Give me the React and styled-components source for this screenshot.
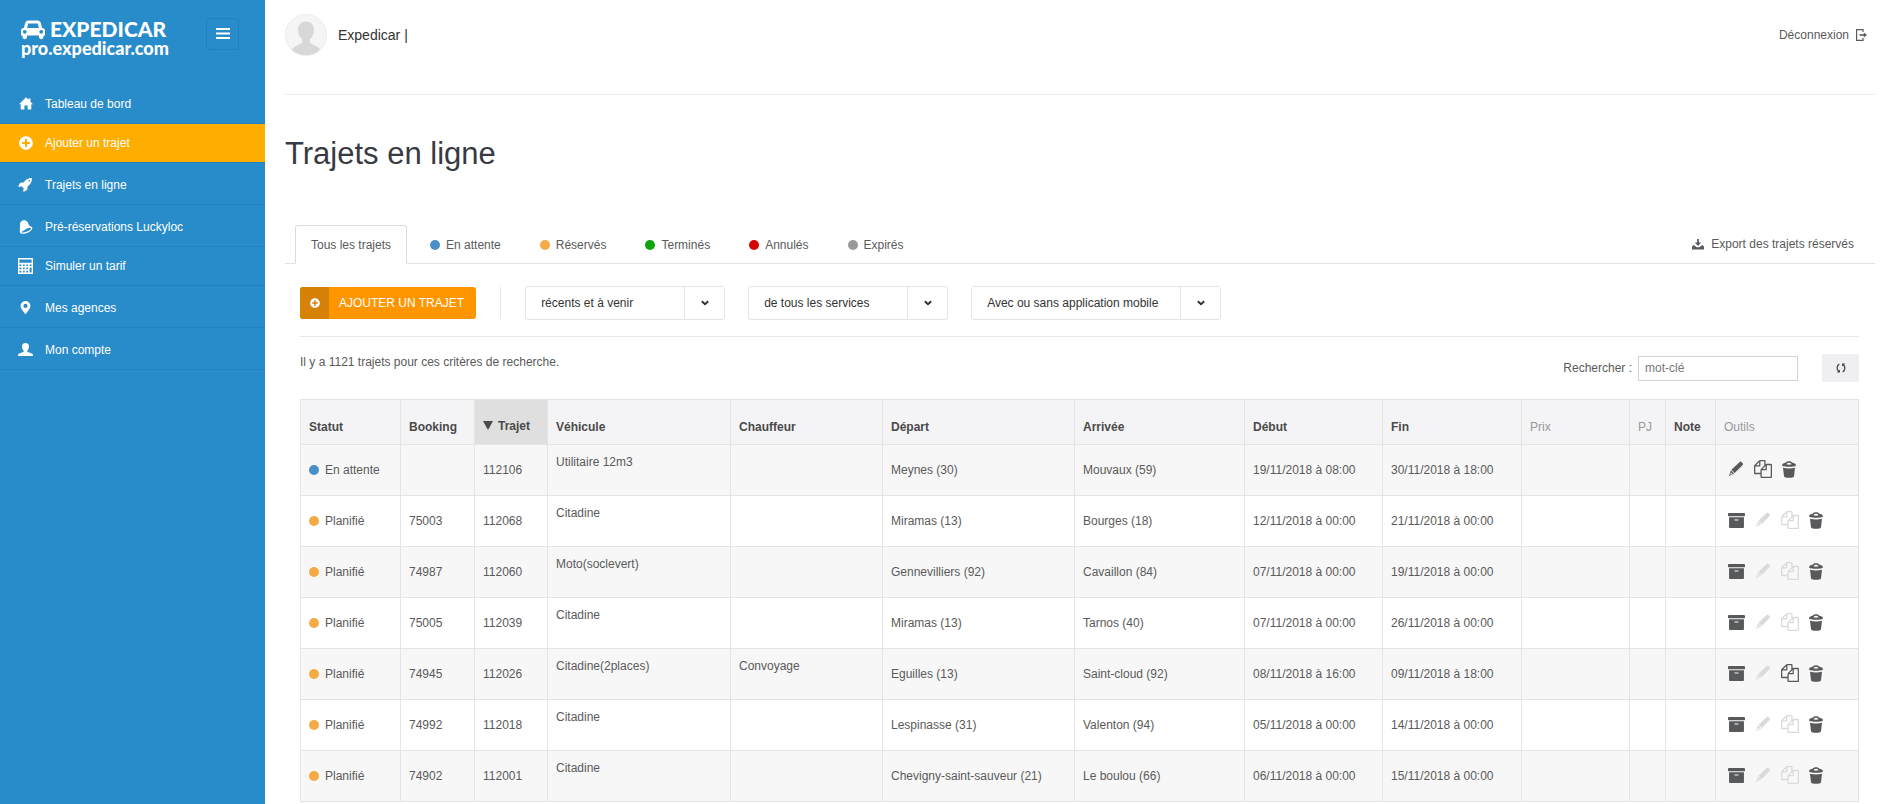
import React, { useState } from "react";
import styled, { createGlobalStyle } from "styled-components";
import { FaArchive, FaMapMarkerAlt, FaPlusCircle } from "react-icons/fa";

const GlobalStyle = createGlobalStyle`
  * {
    box-sizing: border-box;
  }

  body {
    margin: 0;
    background-color: #fff;
    color: #5a5a5a;
    font-family: "Liberation Sans", Arial, sans-serif;
    font-size: 12px;
    line-height: 16px;
  }

  button, input, select {
    font: inherit;
    color: inherit;
  }

  a {
    color: inherit;
    text-decoration: none;
  }
`;

const Page = styled.div`
  display: flex;
  min-height: 100vh;
`;

const Sidebar = styled.aside`
  flex: 0 0 265px;
  background-color: #288bca;
  color: #fff;
`;

const SidebarTop = styled.div`
  display: flex;
  justify-content: space-between;
  align-items: flex-start;
  height: 82px;
  padding: 18px 26px 0 21px;
`;

const Logo = styled.a`
  display: block;
  font-family: Lato, sans-serif;
  font-weight: 900;
`;

const LogoName = styled.span`
  display: flex;
  align-items: center;
  gap: 5px;
  font-size: 21px;
  line-height: 22px;
`;

const LogoSite = styled.span`
  display: block;
  font-size: 18px;
  line-height: 16px;
`;

const MenuButton = styled.button`
  display: flex;
  align-items: center;
  justify-content: center;
  width: 33px;
  height: 32px;
  padding: 0;
  background: transparent;
  border: 1px solid #2380bd;
  border-radius: 3px;
  cursor: pointer;
`;

const NavItem = styled.a`
  display: flex;
  align-items: center;
  gap: 11px;
  height: ${(props) => (props.$compact ? "39px" : "42px")};
  padding: ${(props) => (props.$compact ? "0 0 0 17px" : "2px 0 0 17px")};
  background-color: ${(props) => (props.$active ? "#ffae00" : "transparent")};
  border-bottom: 1px solid #2280be;
`;

const NavIcon = styled.span`
  display: flex;
  justify-content: center;
  width: 17px;
`;

const Content = styled.main`
  flex: 1;
  min-width: 0;
  padding: 0 5px 0 20px;
`;

const Header = styled.header`
  display: flex;
  justify-content: space-between;
  align-items: center;
  padding: 14px 8px 38px 0;
  border-bottom: 1px solid #ececec;
`;

const User = styled.div`
  display: flex;
  align-items: center;
  gap: 11px;
  font-size: 14px;
  color: #333;
`;

const HeaderLink = styled.a`
  display: flex;
  align-items: center;
  gap: 7px;
`;

const Title = styled.h1`
  margin: 41px 0 53px;
  font-size: 31px;
  line-height: 36px;
  font-weight: 400;
  color: #373a42;
`;

const TabBar = styled.div`
  display: flex;
  justify-content: space-between;
  align-items: center;
  padding: 0 21px 0 10px;
  border-bottom: 1px solid #e2e2e2;
`;

const Tabs = styled.nav`
  display: flex;
  gap: 7px;
`;

const Tab = styled.button`
  display: flex;
  align-items: center;
  gap: 6px;
  height: 39px;
  margin-bottom: -1px;
  padding: 0 15px;
  background: ${(props) => (props.$active ? "#fff" : "transparent")};
  border: 1px solid ${(props) => (props.$active ? "#dcdcdc" : "transparent")};
  border-bottom-color: ${(props) => (props.$active ? "#fff" : "transparent")};
  border-radius: 3px 3px 0 0;
  cursor: pointer;
`;

const Dot = styled.span`
  flex: none;
  width: 10px;
  height: 10px;
  border-radius: 50%;
  background-color: ${(props) => props.$color};
`;

const Panel = styled.section`
  margin: 0 16px 0 15px;
`;

const Toolbar = styled.div`
  display: flex;
  align-items: center;
  gap: 24px;
  padding: 22px 0 16px;
  border-bottom: 1px solid #e8e8e8;
`;

const Filters = styled.div`
  display: flex;
  gap: 23px;
`;

const AddButton = styled.button`
  display: flex;
  align-items: stretch;
  height: 32px;
  padding: 0;
  overflow: hidden;
  background-color: #ff9600;
  border: none;
  border-radius: 3px;
  color: #fff;
  cursor: pointer;
`;

const AddIcon = styled.span`
  display: flex;
  align-items: center;
  justify-content: center;
  width: 29px;
  background-color: #d68208;
`;

const AddLabel = styled.span`
  padding: 8px 12px 8px 10px;
`;

const Separator = styled.span`
  width: 1px;
  height: 32px;
  background-color: #e8e8e8;
`;

const SelectBox = styled.div`
  display: grid;
  grid-template-columns: 1fr 40px;
  width: ${(props) => (props.$wide ? "250px" : "200px")};
  height: 34px;
  border: 1px solid #e4e4e4;
  border-radius: 3px;
`;

const Select = styled.select`
  grid-area: 1 / 1 / 2 / 3;
  width: 100%;
  padding: 0 44px 0 15px;
  appearance: none;
  background: transparent;
  border: none;
  color: #333;
`;

const SelectArrow = styled.span`
  grid-area: 1 / 2 / 2 / 3;
  display: flex;
  align-items: center;
  justify-content: center;
  border-left: 1px solid #e4e4e4;
  pointer-events: none;
`;

const ResultBar = styled.div`
  display: flex;
  justify-content: space-between;
  align-items: flex-start;
  padding: 17px 0;
`;

const Search = styled.form`
  display: flex;
  align-items: center;
`;

const SearchInput = styled.input`
  width: 160px;
  height: 25px;
  margin: 0 24px 0 6px;
  padding: 0 6px;
  border: 1px solid #d4d4d4;

  &::placeholder {
    color: #777;
    opacity: 1;
  }
`;

const RefreshButton = styled.button`
  display: flex;
  align-items: center;
  justify-content: center;
  width: 37px;
  height: 28px;
  padding: 0;
  background-color: #efeff1;
  border: none;
  border-radius: 2px;
  cursor: pointer;
`;

const Table = styled.table`
  width: 100%;
  table-layout: fixed;
  border-spacing: 0;
  border-top: 1px solid #e4e4e4;
  border-left: 1px solid #e4e4e4;
`;

const HeadCell = styled.th`
  height: 45px;
  padding: 10px 8px 0;
  background-color: ${(props) => (props.$sorted ? "#dfdfdf" : "#f4f4f6")};
  border-right: 1px solid #e4e4e4;
  border-bottom: 1px solid #e4e4e4;
  color: ${(props) => (props.$muted ? "#999" : "#4a4a4a")};
  font-weight: ${(props) => (props.$muted ? 400 : 700)};
  text-align: left;
  white-space: nowrap;
`;

const SortButton = styled.button`
  display: flex;
  align-items: center;
  gap: 5px;
  padding: 0 0 3px;
  background: none;
  border: none;
  cursor: pointer;
`;

const Row = styled.tr`
  background-color: #fff;

  &:nth-child(odd) {
    background-color: #f7f7f7;
  }
`;

const Cell = styled.td`
  height: 51px;
  padding: ${(props) => (props.$top ? "9px 8px" : "0 8px")};
  vertical-align: ${(props) => (props.$top ? "top" : "middle")};
  border-right: 1px solid #e4e4e4;
  border-bottom: 1px solid #e4e4e4;
  white-space: nowrap;
`;

const Status = styled.span`
  display: flex;
  align-items: center;
  gap: 6px;
`;

const Tools = styled.div`
  display: flex;
  align-items: center;
  gap: 10px;
  padding: 0 0 2px 4px;
`;

const ToolButton = styled.button`
  display: flex;
  padding: 0;
  background: none;
  border: none;
  color: #58595b;
  cursor: pointer;

  &:disabled {
    color: #dadada;
    cursor: default;
  }
`;

const CarIcon = () => (
  <svg width="24" height="21" viewBox="0 0 2048 1792" fill="currentColor">
    <path d="M480 1088q0-66-47-113t-113-47-113 47-47 113 47 113 113 47 113-47 47-113zm36-320h1016l-89-357q-2-8-14-17.5t-21-9.5h-768q-9 0-21 9.5t-14 17.5zm1372 320q0-66-47-113t-113-47-113 47-47 113 47 113 113 47 113-47 47-113zm160-96v384q0 14-9 23t-23 9h-96v128q0 80-56 136t-136 56-136-56-56-136v-128h-1024v128q0 80-56 136t-136 56-136-56-56-136v-128h-96q-14 0-23-9t-9-23v-384q0-93 65.5-158.5t158.5-65.5h28l105-419q23-94 104-157.5t179-63.5h768q98 0 179 63.5t104 157.5l105 419h28q93 0 158.5 65.5t65.5 158.5z" />
  </svg>
);

const MenuIcon = () => (
  <svg width="14" height="12" viewBox="0 0 14 12" fill="#fff">
    <path d="M0 0h14v2H0zM0 4.500h14v2H0zM0 9h14v2H0z" />
  </svg>
);

const HomeIcon = () => (
  <svg width="14" height="13" viewBox="0 0 14 13" fill="currentColor">
    <path d="M7 .2 9.6 2.8V1.6h1.9v3.1L14 7.2h-1.7v4.6q0 .8-.8.8H8.6V8.4H5.4v4.2H2.5q-.8 0-.8-.8V7.2H0z" />
  </svg>
);

const RocketIcon = () => (
  <svg width="15" height="15" viewBox="0 0 1792 1792" fill="currentColor">
    <path d="M1440 448q0-40-28-68t-68-28-68 28-28 68 28 68 68 28 68-28 28-68zm224-288q0 249-75.5 430.5t-253.5 360.5q-81 80-195 176l-20 379q-2 16-16 26l-384 224q-7 4-16 4-12 0-23-9l-64-64q-13-14-8-32l85-276-281-281-276 85q-3 1-9 1-14 0-23-9l-64-64q-17-19-5-39l224-384q10-14 26-16l379-20q96-114 176-195 188-187 358-258t431-71q14 0 24 9.5t10 22.5z" />
  </svg>
);

const BellIcon = () => (
  <svg width="14" height="14" viewBox="0 0 14 14" fill="currentColor">
    <path d="M1.100 12.400C.3 9.600 1.200 7.700 1 5.200.8 2.400 2.200.600 4.600.300 7.200 0 8.700 1.600 9.300 3.600c.7 2.200 1.500 2.600 3 3.600L8.300 8.200 4.200 11z" />
    <path
      d="M1.500 11.900C4.200 8 10 5.700 12.600 7.600 13.400 10.200 7 13.900 2 12.900z"
      fill="none"
      stroke="currentColor"
      strokeWidth="1.300"
    />
  </svg>
);

const CalculatorIcon = () => (
  <svg width="15" height="16" viewBox="0 0 15 16" fill="none" stroke="currentColor">
    <path d="M.7.700h13.600v14.600H.7z" strokeWidth="1.400" />
    <path d="M1 5.600h13M1 8.800h13M1 12h9.500M4.200 5.600V15M7.500 5.600V15M10.800 5.600V15" strokeWidth="1.600" />
  </svg>
);

const UserIcon = () => (
  <svg width="15" height="13" viewBox="0 0 15 13" fill="currentColor">
    <path d="M7.500 0C9.800 0 11 1.500 11 3.500c0 1.700-.7 3.300-1.700 4.200v1.100l4.500 1.700c.9.400 1.200.9 1.200 2.500H0c0-1.600.3-2.100 1.200-2.500l4.500-1.700V7.700C4.700 6.800 4 5.200 4 3.500 4 1.500 5.200 0 7.500 0z" />
  </svg>
);

const AvatarIcon = () => (
  <svg width="42" height="42" viewBox="0 0 42 42">
    <circle cx="21" cy="21" r="20.500" fill="#f5f5f5" stroke="#ececec" />
    <path
      d="M21 7.500c5 0 8 3.300 8 8.500 0 4-1.700 7.200-4 9v3.500c0 2 8.500 2.500 10 7.500C31.500 39.500 26.500 41 21 41S10.500 39.500 7 36c1.500-5 10-5.500 10-7.500V25c-2.300-1.800-4-5-4-9 0-5.200 3-8.500 8-8.500z"
      fill="#d8d8d8"
    />
  </svg>
);

const LogoutIcon = () => (
  <svg width="11" height="12" viewBox="0 0 11 12" fill="none" stroke="currentColor" strokeWidth="1.200">
    <path d="M7 3V.6H.6v10.800H7V9" />
    <path d="M3.500 6h5" strokeWidth="1.600" />
    <path d="M7.800 3.600 11 6 7.800 8.400z" fill="currentColor" stroke="none" />
  </svg>
);

const ExportIcon = () => (
  <svg width="12" height="11" viewBox="0 0 12 11" fill="currentColor">
    <path d="M5.100 0h1.800v3.600h2.300L6 7 2.800 3.600h2.300z" />
    <path d="M0 7.800 1.500 6l1.800 1c.3 1.700 5.100 1.700 5.400 0l1.800-1L12 7.800V10q0 .6-.6.6H.6Q0 10.600 0 10z" />
  </svg>
);

const ChevronIcon = () => (
  <svg width="8" height="6" viewBox="0 0 8 6" fill="none" stroke="#333" strokeWidth="2">
    <path d="m.8 1.200 3.200 3 3.200-3" />
  </svg>
);

const RefreshIcon = () => (
  <svg width="10" height="10" viewBox="0 0 10 10" fill="none" stroke="#444" strokeWidth="1.300">
    <path d="M3.300 1.200C.6 2.400.4 6.800 3 8.600M6.700 8.800C9.400 7.600 9.600 3.200 7 1.400" />
    <path d="M3.900 6.400v3.200H.8zM6.100 3.600V.4h3.100z" fill="#444" stroke="none" />
  </svg>
);

const SortIcon = () => (
  <svg width="10" height="9" viewBox="0 0 10 9" fill="currentColor">
    <path d="M0 0h10L5 9z" />
  </svg>
);

const PencilIcon = () => (
  <svg width="16" height="16" viewBox="0 0 16 16" fill="currentColor">
    <path d="M11.700.900q.9-.8 1.700 0l1.300 1.300q.8.800 0 1.700L6.700 12 3.400 8.700z" />
    <path d="M2.900 9.300 6.200 12.600 1 15zM3 11.400l-.9 2.300 2.300-.9z" fillRule="evenodd" />
  </svg>
);

const CopyIcon = () => (
  <svg width="18" height="18" viewBox="0 0 1792 1792" fill="currentColor">
    <path d="M1696 384q40 0 68 28t28 68v1216q0 40-28 68t-68 28h-960q-40 0-68-28t-28-68v-288h-544q-40 0-68-28t-28-68v-672q0-40 20-88t48-76l408-408q28-28 76-48t88-20h416q40 0 68 28t28 68v328q68-40 128-40h416zm-544 213l-299 299h299v-299zm-640-384l-299 299h299v-299zm196 647l316-316v-416h-384v416q0 40-28 68t-68 28h-416v640h512v-256q0-40 20-88t48-76zm956 804v-1152h-384v416q0 40-28 68t-68 28h-416v640h896z" />
  </svg>
);

const TrashIcon = () => (
  <svg width="14" height="17" viewBox="0 0 14 17" fill="currentColor">
    <path
      d="M0 4.200C0 2.800 2 2 4 1.500 4.500-.1 9.500-.1 10 1.500c2 .5 4 1.300 4 2.700 0 2-14 2-14 0zM4.300 3.300q2.700.9 5.400 0Q7 .4 4.300 3.300z"
      fillRule="evenodd"
    />
    <path d="M1 6.700q6 1.600 12 0l-1 8.500c-.3 2-9.700 2-10 0z" />
  </svg>
);

const menu = [
  { label: "Tableau de bord", icon: <HomeIcon /> },
  { label: "Ajouter un trajet", icon: <FaPlusCircle size={14} />, active: true, compact: true },
  { label: "Trajets en ligne", icon: <RocketIcon /> },
  { label: "Pré-réservations Luckyloc", icon: <BellIcon /> },
  { label: "Simuler un tarif", icon: <CalculatorIcon />, compact: true },
  { label: "Mes agences", icon: <FaMapMarkerAlt size={13} /> },
  { label: "Mon compte", icon: <UserIcon /> },
];

const onglets = [
  { label: "Tous les trajets" },
  { label: "En attente", color: "#4a8fc7" },
  { label: "Réservés", color: "#f4aa45" },
  { label: "Terminés", color: "#0ba50b" },
  { label: "Annulés", color: "#d50505" },
  { label: "Expirés", color: "#999" },
];

const filtres = [
  { name: "Période", value: "récents et à venir" },
  { name: "Services", value: "de tous les services" },
  { name: "Application mobile", value: "Avec ou sans application mobile", wide: true },
];

const colonnes = [
  { label: "Statut", width: 100 },
  { label: "Booking", width: 74 },
  { label: "Trajet", width: 73, sorted: true },
  { label: "Véhicule", width: 183 },
  { label: "Chauffeur", width: 152 },
  { label: "Départ", width: 192 },
  { label: "Arrivée", width: 170 },
  { label: "Début", width: 138 },
  { label: "Fin", width: 139 },
  { label: "Prix", width: 108, muted: true },
  { label: "PJ", width: 36, muted: true },
  { label: "Note", width: 50 },
  { label: "Outils", width: 143, muted: true },
];

const trajets = [
  { id: "112106", attente: true, booking: "", vehicule: "Utilitaire 12m3", depart: "Meynes (30)", arrivee: "Mouvaux (59)", debut: "19/11/2018 à 08:00", fin: "30/11/2018 à 18:00", copie: true },
  { id: "112068", booking: "75003", vehicule: "Citadine", depart: "Miramas (13)", arrivee: "Bourges (18)", debut: "12/11/2018 à 00:00", fin: "21/11/2018 à 00:00" },
  { id: "112060", booking: "74987", vehicule: "Moto(soclevert)", depart: "Gennevilliers (92)", arrivee: "Cavaillon (84)", debut: "07/11/2018 à 00:00", fin: "19/11/2018 à 00:00" },
  { id: "112039", booking: "75005", vehicule: "Citadine", depart: "Miramas (13)", arrivee: "Tarnos (40)", debut: "07/11/2018 à 00:00", fin: "26/11/2018 à 00:00" },
  { id: "112026", booking: "74945", vehicule: "Citadine(2places)", chauffeur: "Convoyage", depart: "Eguilles (13)", arrivee: "Saint-cloud (92)", debut: "08/11/2018 à 16:00", fin: "09/11/2018 à 18:00", copie: true },
  { id: "112018", booking: "74992", vehicule: "Citadine", depart: "Lespinasse (31)", arrivee: "Valenton (94)", debut: "05/11/2018 à 00:00", fin: "14/11/2018 à 00:00" },
  { id: "112001", booking: "74902", vehicule: "Citadine", depart: "Chevigny-saint-sauveur (21)", arrivee: "Le boulou (66)", debut: "06/11/2018 à 00:00", fin: "15/11/2018 à 00:00" },
];

export default function App() {
  const [onglet, setOnglet] = useState("Tous les trajets");
  const [recherche, setRecherche] = useState("");

  return (
    <Page>
      <GlobalStyle />
      <Sidebar>
        <SidebarTop>
          <Logo href="#">
            <LogoName>
              <CarIcon />
              EXPEDICAR
            </LogoName>
            <LogoSite>pro.expedicar.com</LogoSite>
          </Logo>
          <MenuButton type="button" aria-label="Menu">
            <MenuIcon />
          </MenuButton>
        </SidebarTop>
        <nav>
          {menu.map((item) => (
            <NavItem key={item.label} href="#" $active={item.active} $compact={item.compact}>
              <NavIcon>{item.icon}</NavIcon>
              {item.label}
            </NavItem>
          ))}
        </nav>
      </Sidebar>

      <Content>
        <Header>
          <User>
            <AvatarIcon />
            <span>Expedicar |</span>
          </User>
          <HeaderLink href="#">
            Déconnexion
            <LogoutIcon />
          </HeaderLink>
        </Header>

        <Title>Trajets en ligne</Title>

        <TabBar>
          <Tabs>
            {onglets.map((item) => (
              <Tab
                key={item.label}
                type="button"
                $active={item.label === onglet}
                onClick={() => setOnglet(item.label)}
              >
                {item.color && <Dot $color={item.color} />}
                {item.label}
              </Tab>
            ))}
          </Tabs>
          <HeaderLink href="#">
            <ExportIcon />
            Export des trajets réservés
          </HeaderLink>
        </TabBar>

        <Panel>
          <Toolbar>
            <AddButton type="button">
              <AddIcon>
                <FaPlusCircle size={10} />
              </AddIcon>
              <AddLabel>AJOUTER UN TRAJET</AddLabel>
            </AddButton>
            <Separator />
            <Filters>
              {filtres.map((filtre) => (
                <SelectBox key={filtre.name} $wide={filtre.wide}>
                  <Select aria-label={filtre.name}>
                    <option>{filtre.value}</option>
                  </Select>
                  <SelectArrow>
                    <ChevronIcon />
                  </SelectArrow>
                </SelectBox>
              ))}
            </Filters>
          </Toolbar>

          <ResultBar>
            <span>Il y a 1121 trajets pour ces critères de recherche.</span>
            <Search onSubmit={(e) => e.preventDefault()}>
              <label htmlFor="rechercher">Rechercher :</label>
              <SearchInput
                id="rechercher"
                placeholder="mot-clé"
                value={recherche}
                onChange={(e) => setRecherche(e.target.value)}
              />
              <RefreshButton type="submit" aria-label="Actualiser">
                <RefreshIcon />
              </RefreshButton>
            </Search>
          </ResultBar>

          <Table>
            <colgroup>
              {colonnes.map((col) => (
                <col key={col.label} width={col.width} />
              ))}
            </colgroup>
            <thead>
              <tr>
                {colonnes.map((col) => (
                  <HeadCell key={col.label} scope="col" $sorted={col.sorted} $muted={col.muted}>
                    {col.sorted ? (
                      <SortButton type="button">
                        <SortIcon />
                        {col.label}
                      </SortButton>
                    ) : (
                      col.label
                    )}
                  </HeadCell>
                ))}
              </tr>
            </thead>
            <tbody>
              {trajets.map((trajet) => (
                <Row key={trajet.id}>
                  <Cell>
                    <Status>
                      <Dot $color={trajet.attente ? "#4a8fc7" : "#f4aa45"} />
                      {trajet.attente ? "En attente" : "Planifié"}
                    </Status>
                  </Cell>
                  <Cell>{trajet.booking}</Cell>
                  <Cell>{trajet.id}</Cell>
                  <Cell $top>{trajet.vehicule}</Cell>
                  <Cell $top>{trajet.chauffeur}</Cell>
                  <Cell>{trajet.depart}</Cell>
                  <Cell>{trajet.arrivee}</Cell>
                  <Cell>{trajet.debut}</Cell>
                  <Cell>{trajet.fin}</Cell>
                  <Cell />
                  <Cell />
                  <Cell />
                  <Cell>
                    <Tools>
                      {!trajet.attente && (
                        <ToolButton type="button" aria-label="Archiver">
                          <FaArchive size={17} />
                        </ToolButton>
                      )}
                      <ToolButton type="button" aria-label="Modifier" disabled={!trajet.attente}>
                        <PencilIcon />
                      </ToolButton>
                      <ToolButton type="button" aria-label="Dupliquer" disabled={!trajet.copie}>
                        <CopyIcon />
                      </ToolButton>
                      <ToolButton type="button" aria-label="Supprimer">
                        <TrashIcon />
                      </ToolButton>
                    </Tools>
                  </Cell>
                </Row>
              ))}
            </tbody>
          </Table>
        </Panel>
      </Content>
    </Page>
  );
}
